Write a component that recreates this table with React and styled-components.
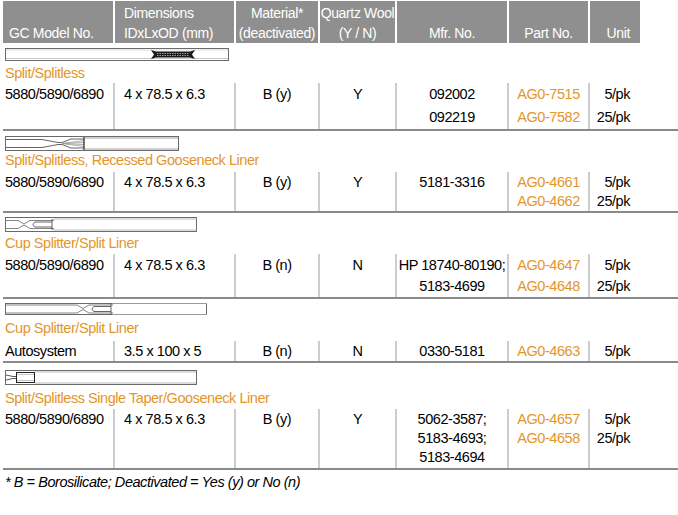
import React from 'react';
import styled, { createGlobalStyle } from 'styled-components';

const COLS = '112px 121px 84px 77px 112px 81px 50px';

const GlobalStyle = createGlobalStyle`
  body {
    margin: 0;
    background: #ffffff;
    font-family: 'Liberation Sans', Arial, sans-serif;
    font-size: 14.5px;
    letter-spacing: -0.45px;
    color: #000;
  }
`;

const Page = styled.div`
  width: 678px;
  height: 515px;
  padding: 1px 0 0 3px;
  box-sizing: border-box;
  overflow: hidden;
`;

const HeaderRow = styled.div`
  display: grid;
  grid-template-columns: ${COLS};
  height: 42px;
  font-size: 14px;
  letter-spacing: -0.35px;
`;

const HeadCell = styled.div`
  display: flex;
  flex-direction: column;
  justify-content: flex-end;
  background: #8f8f8f;
  color: #ffffff;
  line-height: 20px;
  border-right: 2px solid #ffffff;
  text-align: ${p => p.$align || 'center'};
  padding: ${p => p.$pad || '0'};
  white-space: nowrap;
  &:last-child {
    border-right: none;
  }
`;

const Drawing = styled.svg`
  display: block;
  margin: ${p => p.$mt}px 0 0 2px;
`;

const Label = styled.div`
  margin-top: ${p => p.$mt}px;
  padding-left: 2px;
  line-height: 18px;
  height: 18px;
  color: #e3962a;
`;

const Row = styled.div`
  display: grid;
  grid-template-columns: ${COLS};
  margin-top: ${p => p.$mt}px;
  height: ${p => p.$h}px;
  box-sizing: border-box;
  border-bottom: 2px solid #8a8a8a;
  line-height: ${p => p.$lh}px;
`;

const Cell = styled.div`
  border-right: 2px solid #cdcdcd;
  padding: ${p => p.$pad || '0'};
  padding-top: ${p => p.$pt || 0}px;
  text-align: ${p => p.$align || 'center'};
  color: ${p => (p.$part ? '#e3962a' : '#000')};
  white-space: nowrap;
  &:last-child {
    border-right: none;
  }
`;

const Footnote = styled.div`
  margin-top: 3px;
  padding-left: 2px;
  line-height: 18px;
  font-style: italic;
`;

const Tube = ({ w, h, children }) => (
  <>
    <rect x="0.5" y="0.5" width={w - 1} height={h - 1} fill="#fff" stroke="#6a6a6a" strokeWidth="1" />
    {children}
  </>
);

const WoolLiner = () => (
  <Drawing $mt={5} width="224" height="13" viewBox="0 0 224 13">
    <Tube w={224} h={13}>
      <line x1="1" y1="10.5" x2="223" y2="10.5" stroke="#c8c8c8" />
      <line x1="1" y1="2" x2="223" y2="2" stroke="#dcdcdc" />
      <path d="M146,2 L151,3.5 L185,3.5 L190,2 L187,6.5 L190,11 L185,9.5 L151,9.5 L146,11 L149,6.5 Z" fill="#1a1a1a" />
      <line x1="152" y1="5.5" x2="184" y2="5.5" stroke="#bbb" strokeWidth="0.8" strokeDasharray="1.5 1" />
      <line x1="152" y1="7.5" x2="184" y2="7.5" stroke="#bbb" strokeWidth="0.8" strokeDasharray="1.5 1" />
    </Tube>
  </Drawing>
);

const GooseneckLiner = () => (
  <Drawing $mt={5} width="174" height="15" viewBox="0 0 174 15">
    <Tube w={174} h={15}>
      <path d="M1,3.5 H37 L53,6.5 H57 L66,3 H79" fill="none" stroke="#555" strokeWidth="0.9" />
      <path d="M1,11.5 H37 L53,8.5 H57 L66,12 H79" fill="none" stroke="#555" strokeWidth="0.9" />
      <path d="M57,7.5 L79,4.5 M57,7.5 L79,6.5 M57,7.5 L79,8.5 M57,7.5 L79,10.5" stroke="#999" strokeWidth="0.8" />
      <line x1="79" y1="1" x2="79" y2="14" stroke="#222" strokeWidth="1.2" />
      <line x1="80" y1="2" x2="173" y2="2" stroke="#888" strokeWidth="0.8" />
      <line x1="80" y1="13" x2="173" y2="13" stroke="#888" strokeWidth="0.8" />
    </Tube>
  </Drawing>
);

const CupLiner = ({ w, h, at, mt }) => (
  <Drawing $mt={mt} width={w} height={h} viewBox={`0 0 ${w} ${h}`}>
    <Tube w={w} h={h}>
      <g transform={`translate(${at},${(h - 15) / 2})`}>
        <path d="M-100,3.5 H0 L6,7 L12,3.5 H36" fill="none" stroke="#777" strokeWidth="0.9" />
        <path d="M-100,11.5 H0 L6,8 L12,11.5 H36" fill="none" stroke="#777" strokeWidth="0.9" />
        <path d="M34,5 H17 Q13,7.5 17,10 H34" fill="none" stroke="#555" strokeWidth="0.9" />
        <line x1="34" y1="2" x2="34" y2="13" stroke="#555" strokeWidth="0.9" />
        <line x1="35" y1="2" x2={w} y2="2" stroke="#aaa" strokeWidth="0.8" />
        <line x1="35" y1="13" x2={w} y2="13" stroke="#aaa" strokeWidth="0.8" />
      </g>
    </Tube>
  </Drawing>
);

const TaperLiner = () => (
  <Drawing $mt={7} width="192" height="15" viewBox="0 0 192 15">
    <Tube w={192} h={15}>
      <path d="M1,5 L8,6.5 H12 M1,10 L8,8.5 H12" fill="none" stroke="#444" strokeWidth="0.9" />
      <rect x="11.5" y="2.5" width="18" height="10" fill="none" stroke="#222" strokeWidth="1" />
      <line x1="12" y1="4.5" x2="29" y2="4.5" stroke="#aaa" strokeWidth="0.7" />
      <line x1="12" y1="10.5" x2="29" y2="10.5" stroke="#aaa" strokeWidth="0.7" />
      <line x1="30" y1="2" x2="191" y2="2" stroke="#aaa" strokeWidth="0.8" />
      <line x1="30" y1="13" x2="191" y2="13" stroke="#aaa" strokeWidth="0.8" />
    </Tube>
  </Drawing>
);

const SECTIONS = [
  {
    id: 1,
    drawing: <WoolLiner />,
    label: 'Split/Splitless',
    labelMt: 3,
    rowMt: 1,
    h: 48,
    lh: 23,
    pt: 0,
    model: '5880/5890/6890',
    dims: '4 x 78.5 x 6.3',
    material: 'B (y)',
    wool: 'Y',
    mfr: ['092002', '092219'],
    parts: ['AG0-7515', 'AG0-7582'],
    units: ['5/pk', '25/pk'],
  },
  {
    id: 2,
    drawing: <GooseneckLiner />,
    label: 'Split/Splitless, Recessed Gooseneck Liner',
    labelMt: 0,
    rowMt: 3,
    h: 41,
    lh: 19,
    pt: 1,
    model: '5880/5890/6890',
    dims: '4 x 78.5 x 6.3',
    material: 'B (y)',
    wool: 'Y',
    mfr: ['5181-3316'],
    parts: ['AG0-4661', 'AG0-4662'],
    units: ['5/pk', '25/pk'],
  },
  {
    id: 3,
    drawing: <CupLiner w={192} h={15} at={13} mt={4} />,
    label: 'Cup Splitter/Split Liner',
    labelMt: 2,
    rowMt: 2,
    h: 45,
    lh: 21,
    pt: 1,
    model: '5880/5890/6890',
    dims: '4 x 78.5 x 6.3',
    material: 'B (n)',
    wool: 'N',
    mfr: ['HP 18740-80190;', '5183-4699'],
    parts: ['AG0-4647', 'AG0-4648'],
    units: ['5/pk', '25/pk'],
  },
  {
    id: 4,
    drawing: <CupLiner w={202} h={12} at={72} mt={4} />,
    label: 'Cup Splitter/Split Liner',
    labelMt: 4,
    rowMt: 4,
    h: 22,
    lh: 20,
    pt: 0,
    model: 'Autosystem',
    dims: '3.5 x 100 x 5',
    material: 'B (n)',
    wool: 'N',
    mfr: ['0330-5181'],
    parts: ['AG0-4663'],
    units: ['5/pk'],
  },
  {
    id: 5,
    drawing: <TaperLiner />,
    label: 'Split/Splitless Single Taper/Gooseneck Liner',
    labelMt: 4,
    rowMt: 2,
    h: 61,
    lh: 19,
    pt: 1,
    model: '5880/5890/6890',
    dims: '4 x 78.5 x 6.3',
    material: 'B (y)',
    wool: 'Y',
    mfr: ['5062-3587;', '5183-4693;', '5183-4694'],
    parts: ['AG0-4657', 'AG0-4658'],
    units: ['5/pk', '25/pk'],
  },
];

const Lines = ({ items }) => items.map(text => <div key={text}>{text}</div>);

const App = () => {
  return (
    <Page>
      <GlobalStyle />
      <HeaderRow>
        <HeadCell $align="left" $pad="0 0 0 6px">GC Model No.</HeadCell>
        <HeadCell $align="left" $pad="0 0 0 9px">
          <div>Dimensions</div>
          <div>IDxLxOD (mm)</div>
        </HeadCell>
        <HeadCell>
          <div>Material*</div>
          <div>(deactivated)</div>
        </HeadCell>
        <HeadCell>
          <div>Quartz Wool</div>
          <div>(Y / N)</div>
        </HeadCell>
        <HeadCell>Mfr. No.</HeadCell>
        <HeadCell>Part No.</HeadCell>
        <HeadCell $align="right" $pad="0 10px 0 0">Unit</HeadCell>
      </HeaderRow>
      {SECTIONS.map(section => {
        const { id, drawing, label, labelMt, rowMt, h, lh, pt } = section;
        return (
          <React.Fragment key={id}>
            {drawing}
            <Label $mt={labelMt}>{label}</Label>
            <Row $mt={rowMt} $h={h} $lh={lh}>
              <Cell $align="left" $pad="0 0 0 2px" $pt={pt}>{section.model}</Cell>
              <Cell $align="left" $pad="0 0 0 9px" $pt={pt}>{section.dims}</Cell>
              <Cell $pt={pt}>{section.material}</Cell>
              <Cell $pt={pt}>{section.wool}</Cell>
              <Cell $pt={pt}><Lines items={section.mfr} /></Cell>
              <Cell $pt={pt} $part><Lines items={section.parts} /></Cell>
              <Cell $align="right" $pad="0 10px 0 0" $pt={pt}><Lines items={section.units} /></Cell>
            </Row>
          </React.Fragment>
        );
      })}
      <Footnote>* B = Borosilicate; Deactivated = Yes (y) or No (n)</Footnote>
    </Page>
  );
};

export default App;
